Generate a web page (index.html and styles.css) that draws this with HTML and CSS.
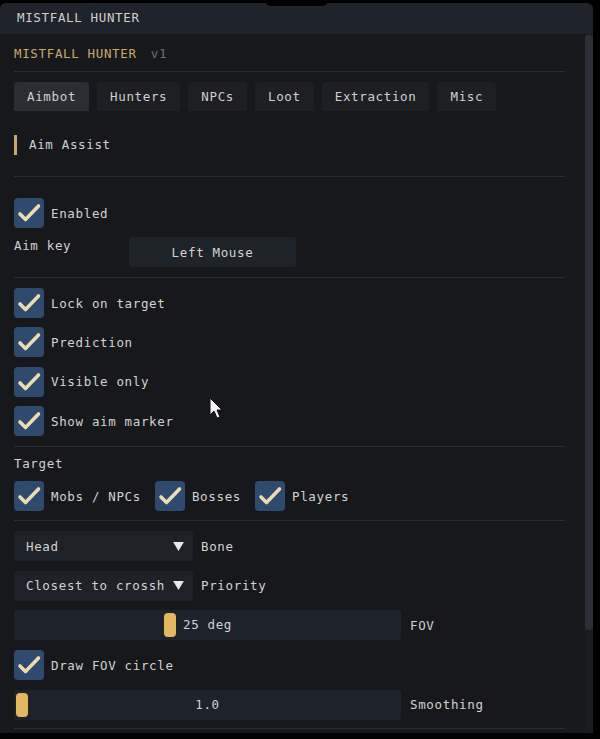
FILE: index.html
```html
<!DOCTYPE html>
<html lang="en">
<head>
    <meta charset="UTF-8">
    <meta name="viewport" content="width=device-width, initial-scale=1.0">
    <title>Mistfall Hunter</title>
    <link rel="stylesheet" href="styles.css">
</head>
<body>
    <div class="window">
        <div class="notch"></div>
        <div class="titlebar">MISTFALL HUNTER</div>

        <div class="body">
            <div class="content">
                <div class="header">
                    <span class="brand">MISTFALL HUNTER</span>
                    <span class="version">v1</span>
                </div>
                <div class="sep sep-head"></div>

                <div class="tabs">
                    <button class="tab active">Aimbot</button>
                    <button class="tab">Hunters</button>
                    <button class="tab">NPCs</button>
                    <button class="tab">Loot</button>
                    <button class="tab">Extraction</button>
                    <button class="tab">Misc</button>
                </div>

                <div class="section-title">Aim Assist</div>
                <div class="sep sep-section"></div>

                <label class="check check-first">
                    <span class="box"><svg viewBox="0 0 30 30"><polyline points="6,16 11.5,21.5 24.5,8"/></svg></span>
                    Enabled
                </label>

                <div class="key-row">
                    <span class="key-label">Aim key</span>
                    <button class="key-button">Left Mouse</button>
                </div>
                <div class="sep sep-mid"></div>

                <div class="check-list">
                    <label class="check">
                        <span class="box"><svg viewBox="0 0 30 30"><polyline points="6,16 11.5,21.5 24.5,8"/></svg></span>
                        Lock on target
                    </label>
                    <label class="check">
                        <span class="box"><svg viewBox="0 0 30 30"><polyline points="6,16 11.5,21.5 24.5,8"/></svg></span>
                        Prediction
                    </label>
                    <label class="check">
                        <span class="box"><svg viewBox="0 0 30 30"><polyline points="6,16 11.5,21.5 24.5,8"/></svg></span>
                        Visible only
                    </label>
                    <label class="check">
                        <span class="box"><svg viewBox="0 0 30 30"><polyline points="6,16 11.5,21.5 24.5,8"/></svg></span>
                        Show aim marker
                    </label>
                </div>
                <div class="sep sep-mid"></div>

                <div class="subtitle">Target</div>
                <div class="check-row">
                    <label class="check">
                        <span class="box"><svg viewBox="0 0 30 30"><polyline points="6,16 11.5,21.5 24.5,8"/></svg></span>
                        Mobs / NPCs
                    </label>
                    <label class="check">
                        <span class="box"><svg viewBox="0 0 30 30"><polyline points="6,16 11.5,21.5 24.5,8"/></svg></span>
                        Bosses
                    </label>
                    <label class="check">
                        <span class="box"><svg viewBox="0 0 30 30"><polyline points="6,16 11.5,21.5 24.5,8"/></svg></span>
                        Players
                    </label>
                </div>
                <div class="sep sep-target"></div>

                <div class="field field-first">
                    <div class="combo">
                        <span class="combo-value">Head</span>
                        <svg class="arrow" viewBox="0 0 12 10"><polygon points="0,0 12,0 6,10"/></svg>
                    </div>
                    <span class="field-label">Bone</span>
                </div>
                <div class="field">
                    <div class="combo">
                        <span class="combo-value">Closest to crosshair</span>
                        <svg class="arrow" viewBox="0 0 12 10"><polygon points="0,0 12,0 6,10"/></svg>
                    </div>
                    <span class="field-label">Priority</span>
                </div>
                <div class="field">
                    <div class="slider">
                        <span class="grab" style="left: 150px"></span>
                        <span class="slider-value">25 deg</span>
                    </div>
                    <span class="field-label">FOV</span>
                </div>

                <label class="check check-fov">
                    <span class="box"><svg viewBox="0 0 30 30"><polyline points="6,16 11.5,21.5 24.5,8"/></svg></span>
                    Draw FOV circle
                </label>

                <div class="field">
                    <div class="slider">
                        <span class="grab" style="left: 2px"></span>
                        <span class="slider-value">1.0</span>
                    </div>
                    <span class="field-label">Smoothing</span>
                </div>
                <div class="sep sep-bottom"></div>
            </div>

            <div class="scrollbar"><div class="thumb"></div></div>
        </div>

        <svg class="cursor" viewBox="0 0 14 22">
            <polygon points="1,1 1,18 5,14 8,21 11,20 8,13 13,13"/>
        </svg>
    </div>
</body>
</html>
```

FILE: styles.css
```css
body {
    margin: 0;
    background-color: #000;
    font-family: "DejaVu Sans Mono", "Liberation Mono", monospace;
    font-size: 12.5px;
    letter-spacing: 0.65px;
    color: #d2d2d2;
}

.window {
    position: relative;
    width: 593px;
    height: 730px;
    margin-top: 3px;
    background-color: #17181b;
    border-radius: 6px 6px 0 0;
    overflow: hidden;
}

.notch {
    position: absolute;
    top: -3px;
    left: 265px;
    width: 63px;
    height: 6px;
    background-color: #000;
    border-radius: 0 0 8px 8px;
}

.titlebar {
    height: 31px;
    line-height: 29px;
    padding-left: 17px;
    background-color: #1f232b;
    color: #d0d0d0;
}

.body {
    display: flex;
    height: 699px;
}

.content {
    flex: 1;
    padding: 0 20px 0 14px;
    overflow: hidden;
}

.scrollbar {
    width: 8px;
    background-color: #1b1c20;
}

.thumb {
    height: 595px;
    margin-top: 1px;
    background-color: #2b2e34;
    border-radius: 3px;
}

.header {
    margin-top: 12px;
    height: 16px;
    line-height: 16px;
}

.brand {
    color: #c9a96c;
}

.version {
    margin-left: 6px;
    color: #6e6e70;
}

.sep {
    height: 1px;
    background-color: #2b2d32;
}

.sep-head {
    margin-top: 9px;
}

.sep-section {
    margin-top: 21px;
}

.sep-mid {
    margin-top: 10px;
}

.sep-target {
    margin-top: 9px;
}

.sep-bottom {
    margin-top: 8px;
}

.tabs {
    display: flex;
    gap: 8px;
    margin-top: 10px;
}

.tab {
    height: 29px;
    padding: 0 13px;
    border: none;
    border-radius: 4px 4px 0 0;
    background-color: #1d1f23;
    color: #d0d0d0;
    font: inherit;
    letter-spacing: inherit;
}

.tab.active {
    background-color: #2a2d32;
}

.section-title {
    margin-top: 24px;
    height: 20px;
    line-height: 20px;
    padding-left: 12px;
    border-left: 3px solid #c9a96c;
}

.check {
    display: flex;
    align-items: center;
    gap: 7px;
    height: 30px;
}

.check-first {
    margin-top: 21px;
}

.check-fov {
    margin-top: 10px;
}

.box {
    width: 30px;
    height: 30px;
    border-radius: 4px;
    background-color: #2e4a6c;
}

.box svg {
    display: block;
    width: 30px;
    height: 30px;
}

.box polyline {
    fill: none;
    stroke: #eadcb0;
    stroke-width: 3.6;
    stroke-linecap: round;
    stroke-linejoin: round;
}

.key-row {
    display: flex;
    align-items: flex-start;
    margin-top: 9px;
    height: 30px;
}

.key-label {
    width: 115px;
    line-height: 17px;
}

.key-button {
    width: 167px;
    height: 30px;
    border: none;
    border-radius: 3px;
    background-color: #1e2229;
    color: #d2d2d2;
    font: inherit;
    letter-spacing: inherit;
}

.check-list {
    display: flex;
    flex-direction: column;
    gap: 9.4px;
    margin-top: 10px;
}

.subtitle {
    margin-top: 9px;
    height: 16px;
    line-height: 16px;
}

.check-row {
    display: flex;
    gap: 14px;
    margin-top: 9px;
}

.field {
    display: flex;
    align-items: center;
    gap: 8px;
    margin-top: 9.5px;
    height: 30px;
}

.field-first {
    margin-top: 10px;
}

.combo {
    display: flex;
    align-items: center;
    width: 179px;
    height: 30px;
    padding-left: 12px;
    box-sizing: border-box;
    background-color: #1e2128;
    border-radius: 3px;
}

.combo-value {
    width: 139px;
    overflow: hidden;
    white-space: nowrap;
}

.arrow {
    width: 11px;
    height: 9px;
    margin-left: 8px;
    fill: #e8e8e8;
}

.slider {
    position: relative;
    width: 387px;
    height: 30px;
    background-color: #1e222a;
    border-radius: 3px;
    text-align: center;
    line-height: 30px;
}

.slider + .field-label {
    margin-left: 1px;
}

.grab {
    position: absolute;
    top: 3px;
    width: 12px;
    height: 24px;
    background-color: #e2b85e;
    border-radius: 4px;
}

.slider-value {
    position: relative;
}

.cursor {
    position: absolute;
    left: 209px;
    top: 394px;
    width: 14px;
    height: 22px;
}

.cursor polygon {
    fill: #f4f4f4;
    stroke: #111;
    stroke-width: 1;
}
```
